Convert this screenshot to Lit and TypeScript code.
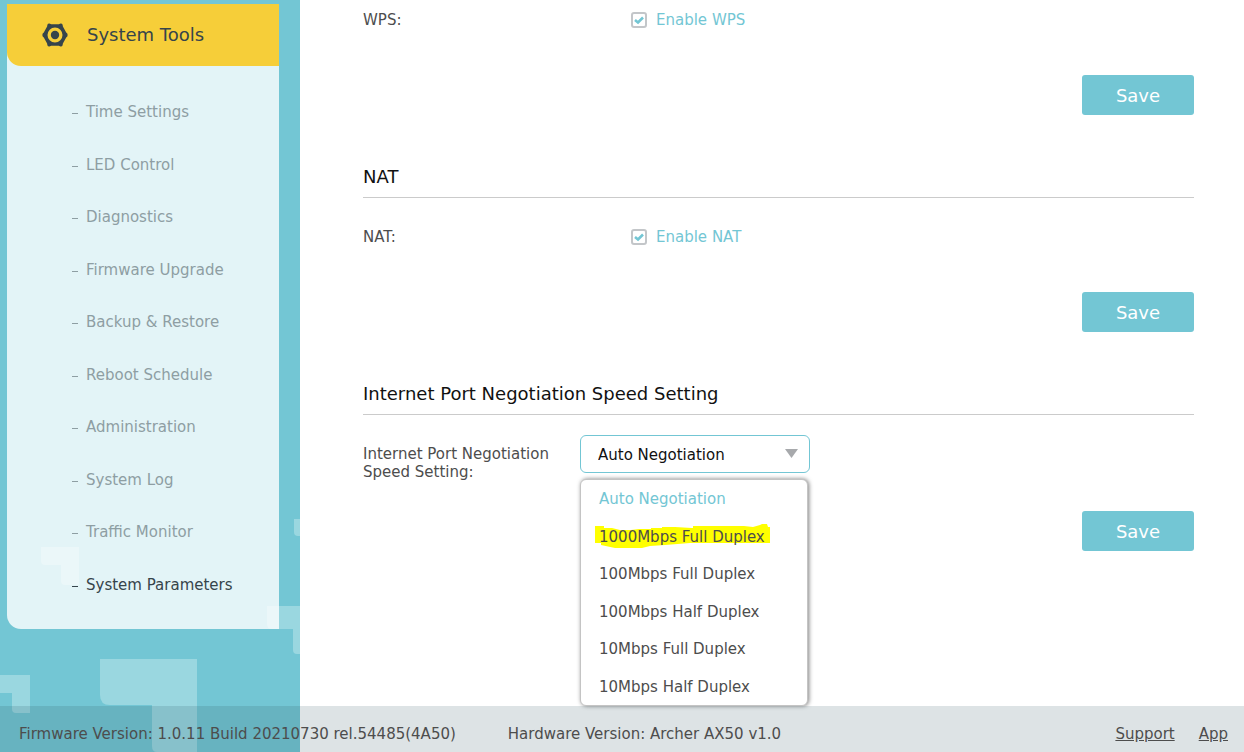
import { LitElement, html, css, svg, nothing } from "lit";
import { customElement, state } from "lit/decorators.js";
import { classMap } from "lit/directives/class-map.js";

const MENU = [
  "Time Settings",
  "LED Control",
  "Diagnostics",
  "Firmware Upgrade",
  "Backup & Restore",
  "Reboot Schedule",
  "Administration",
  "System Log",
  "Traffic Monitor",
  "System Parameters",
];

const SPEEDS = [
  "Auto Negotiation",
  "1000Mbps Full Duplex",
  "100Mbps Full Duplex",
  "100Mbps Half Duplex",
  "10Mbps Full Duplex",
  "10Mbps Half Duplex",
];

@customElement("app-sidebar")
class AppSidebar extends LitElement {
  static styles = css`
    :host {
      display: block;
      position: relative;
      overflow: hidden;
      background: #73c6d4;
      padding: 4px 21px 0 7px;
    }
    .pattern {
      position: absolute;
      left: 0;
      bottom: 0;
      fill: #9ad7e0;
    }
    .panel {
      position: relative;
      background: rgba(255, 255, 255, 0.8);
      border-radius: 0 0 0 14px;
    }
    .title {
      display: flex;
      align-items: center;
      gap: 19px;
      padding: 0 35px;
      height: 62px;
      background: #f6ce39;
      border-radius: 0 0 0 14px;
      color: #36444b;
      font-size: 18px;
      text-decoration: none;
    }
    .menu {
      list-style: none;
      margin: 0;
      padding: 19px 0;
    }
    .item {
      display: flex;
      gap: 8px;
      padding: 16px 0 14px 65px;
      font-size: 15px;
      line-height: 1.5;
      color: #8e9ea3;
      text-decoration: none;
    }
    .dash {
      display: block;
      width: 6px;
      height: 1px;
      margin-top: 12px;
      background: currentColor;
    }
    .current {
      color: #36444b;
    }
  `;

  render() {
    return html`
      <svg class="pattern" width="300" height="240" viewBox="0 0 300 240" aria-hidden="true">
        <path d="M41 35H79V73H65Q61 73 61 69V53H45Q41 53 41 49Z" />
        <path d="M294 7H300V24H298Q294 24 294 20Z" />
        <path d="M267 94H300V142H297Q293 142 293 138V117H272Q267 117 267 112Z" />
        <path d="M0 163H30V201H16Q12 201 12 197V181H0Z" />
        <path d="M100 147H197V240H157Q152 240 152 234V193H110Q100 193 100 183Z" />
      </svg>
      <nav class="panel">
        <a class="title" href="#system">
          <svg width="26" height="24" viewBox="0 0 26 24" aria-hidden="true">
            <path
              fill="#36444b"
              fill-rule="evenodd"
              d="M5.4 1.8Q5.8 .4 7.4.5L9.2 1.3H16.8L18.6.5Q20.2 .4 20.6 1.8L20.9 3.4L24.2 9.6L25.3 10.6Q26 12 25.3 13.4L24.2 14.4L20.9 20.6L20.6 22.2Q20.2 23.6 18.6 23.5L16.8 22.7H9.2L7.4 23.5Q5.8 23.6 5.4 22.2L5.1 20.6L1.8 14.4L.7 13.4Q0 12 .7 10.6L1.8 9.6L5.1 3.4ZM13 4.5A7.5 7.5 0 1 0 13 19.5A7.5 7.5 0 1 0 13 4.5Z"
            />
            <circle cx="13" cy="12" r="4.2" fill="#36444b" />
          </svg>
          <span>System Tools</span>
        </a>
        <ul class="menu">
          ${MENU.map(
            (label, i) => html`<li>
              <a
                class=${classMap({ item: true, current: i === MENU.length - 1 })}
                href="#${label.toLowerCase().replace(/\W+/g, "-")}"
                aria-current=${i === MENU.length - 1 ? "page" : nothing}
                ><span class="dash"></span>${label}</a
              >
            </li>`
          )}
        </ul>
      </nav>
    `;
  }
}

@customElement("app-root")
class AppRoot extends LitElement {
  @state() speed = SPEEDS[0];

  static styles = css`
    :host {
      display: block;
      position: relative;
      min-height: 100vh;
      background: #fff;
      color: #4d4d4d;
      font-family: Verdana, "DejaVu Sans", sans-serif;
      font-size: 15px;
      line-height: 18px;
    }
    .layout {
      display: grid;
      grid-template-columns: 300px 1fr;
      min-height: 100vh;
    }
    main {
      padding: 1px 50px 60px 63px;
    }
    h2 {
      margin: 49px 0 0;
      padding-bottom: 7px;
      border-bottom: 1px solid #cbcbcb;
      color: #111;
      font-size: 18px;
      line-height: 26px;
      font-weight: 400;
    }
    .row {
      display: grid;
      grid-template-columns: 217px 1fr;
      align-items: start;
      min-height: 38px;
      margin-top: 20px;
    }
    .first {
      margin-top: 0;
    }
    .name {
      padding-top: 10px;
    }
    .check {
      display: flex;
      align-items: center;
      gap: 9px;
      padding: 10px 0 0 51px;
      color: #73c6d4;
    }
    .box {
      appearance: none;
      width: 16px;
      height: 16px;
      margin: 0;
      border: 2px solid #c3c6c9;
      border-radius: 3px;
      background: #fff;
    }
    .box:checked {
      background: #fff
        url("data:image/svg+xml,%3Csvg xmlns='http://www.w3.org/2000/svg' viewBox='0 0 12 12'%3E%3Cpath d='M2 6L5 8.500L10 3.500' fill='none' stroke='%2373c6d4' stroke-width='2.600'/%3E%3C/svg%3E")
        center / 12px 12px no-repeat;
    }
    .actions {
      display: flex;
      justify-content: flex-end;
      margin-top: 36px;
    }
    .near {
      margin-top: 30px;
    }
    .save {
      width: 112px;
      height: 40px;
      padding: 2px 0 0;
      border: 0;
      border-radius: 3px;
      background: #73c6d4;
      color: #fff;
      font: inherit;
      font-size: 18px;
    }
    .combo {
      position: relative;
      width: 230px;
    }
    .select {
      appearance: none;
      display: block;
      width: 100%;
      height: 38px;
      padding: 2px 40px 0 17px;
      border: 1px solid #73c6d4;
      border-radius: 6px;
      background: #fff
        url("data:image/svg+xml,%3Csvg xmlns='http://www.w3.org/2000/svg' viewBox='0 0 13 9'%3E%3Cpath d='M0 0H13L6.500 9Z' fill='%23a7a9ac'/%3E%3C/svg%3E")
        right 11px top 13px / 13px 9px no-repeat;
      color: #111;
      font: inherit;
    }
    .list {
      position: absolute;
      left: 0;
      top: 44px;
      width: 228px;
      box-sizing: border-box;
      margin: 0;
      padding: 0;
      list-style: none;
      border: 1px solid #c4c4c4;
      border-radius: 6px;
      background: #fff;
      box-shadow: 1px 0 4px rgba(0, 0, 0, 0.5);
    }
    .option {
      position: relative;
      padding: 8px 18px 7px;
      line-height: 1.5;
    }
    .chosen {
      color: #73c6d4;
    }
    .text {
      position: relative;
    }
    .marker {
      position: absolute;
      left: 14px;
      top: 6px;
      fill: #ff0;
    }
    footer {
      position: absolute;
      z-index: 1;
      left: 0;
      right: 0;
      bottom: 0;
      display: flex;
      padding: 18px 16px 8px 19px;
      gap: 52px;
      line-height: 20px;
      background: rgba(36, 78, 90, 0.155);
    }
    .links {
      display: flex;
      gap: 24px;
      margin-left: auto;
    }
    .link {
      color: inherit;
    }
  `;

  private save(near = false) {
    return html`<div class=${classMap({ actions: true, near })}>
      <button class="save" type="submit">Save</button>
    </div>`;
  }

  private toggle(name: string, first = false) {
    return html`<div class=${classMap({ row: true, first })}>
      <span class="name">${name}:</span>
      <label class="check"><input class="box" type="checkbox" checked />Enable ${name}</label>
    </div>`;
  }

  private submit(e: Event) {
    e.preventDefault();
  }

  render() {
    return html`
      <div class="layout">
        <app-sidebar></app-sidebar>
        <main>
          <form @submit=${this.submit}>${this.toggle("WPS", true)} ${this.save()}</form>
          <h2>NAT</h2>
          <form @submit=${this.submit}>${this.toggle("NAT")} ${this.save()}</form>
          <h2>Internet Port Negotiation Speed Setting</h2>
          <form @submit=${this.submit}>
            <div class="row">
              <label class="name" for="speed">Internet Port Negotiation Speed Setting:</label>
              <div class="combo">
                <select
                  id="speed"
                  class="select"
                  .value=${this.speed}
                  @change=${(e: Event) => (this.speed = (e.target as HTMLSelectElement).value)}
                >
                  ${SPEEDS.map((s) => html`<option>${s}</option>`)}
                </select>
                <ul class="list" role="listbox" aria-label="Speed options">
                  ${SPEEDS.map(
                    (s, i) => html`<li
                      class=${classMap({ option: true, chosen: s === this.speed })}
                      role="option"
                      aria-selected=${s === this.speed}
                      @click=${() => (this.speed = s)}
                    >
                      ${i === 1
                        ? html`<svg class="marker" width="176" height="26" viewBox="0 0 176 26" aria-hidden="true">
                            ${svg`<path d="M0 2H9V4H17L25 6H36L44 5H56V4H67V3H80L97 4H98V2H149L158 3L165 1L167 0H172L173 3H175V19H95L70 21L55 22L47 24H20L6 21V19H0Z" />`}
                          </svg>`
                        : nothing}<span class="text">${s}</span>
                    </li>`
                  )}
                </ul>
              </div>
            </div>
            ${this.save(true)}
          </form>
        </main>
      </div>
      <footer>
        <span>Firmware Version: 1.0.11 Build 20210730 rel.54485(4A50)</span>
        <span>Hardware Version: Archer AX50 v1.0</span>
        <div class="links">
          <a class="link" href="#support">Support</a>
          <a class="link" href="#app">App</a>
        </div>
      </footer>
    `;
  }
}
